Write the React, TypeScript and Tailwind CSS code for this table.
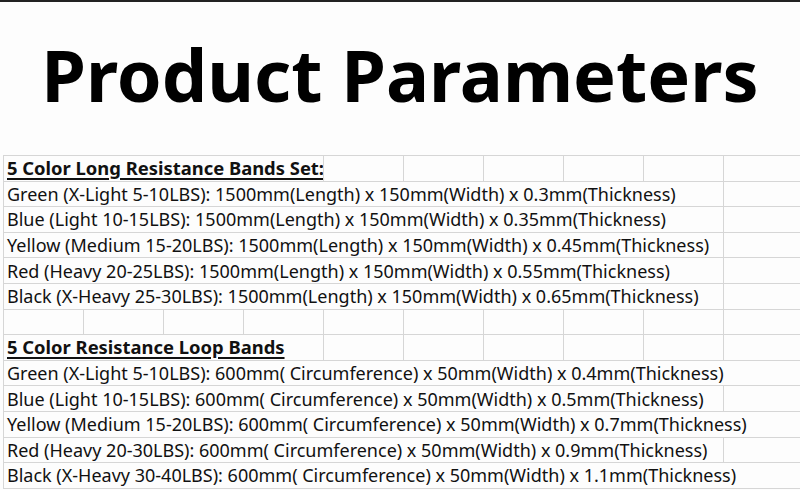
import React from 'react';

type Row = { text?: string; span?: number; head?: boolean };

const rows: Row[] = [
  { text: '5 Color Long Resistance Bands Set:', span: 4, head: true },
  { text: 'Green (X-Light 5-10LBS): 1500mm(Length) x 150mm(Width) x 0.3mm(Thickness)', span: 9 },
  { text: 'Blue (Light 10-15LBS): 1500mm(Length) x 150mm(Width) x 0.35mm(Thickness)', span: 9 },
  { text: 'Yellow (Medium 15-20LBS): 1500mm(Length) x 150mm(Width) x 0.45mm(Thickness)', span: 9 },
  { text: 'Red (Heavy 20-25LBS): 1500mm(Length) x 150mm(Width) x 0.55mm(Thickness)', span: 9 },
  { text: 'Black (X-Heavy 25-30LBS): 1500mm(Length) x 150mm(Width) x 0.65mm(Thickness)', span: 9 },
  {},
  { text: '5 Color Resistance Loop Bands', span: 4, head: true },
  { text: 'Green (X-Light 5-10LBS): 600mm( Circumference) x 50mm(Width) x 0.4mm(Thickness)', span: 10 },
  { text: 'Blue (Light 10-15LBS): 600mm( Circumference) x 50mm(Width) x 0.5mm(Thickness)', span: 9 },
  { text: 'Yellow (Medium 15-20LBS): 600mm( Circumference) x 50mm(Width) x 0.7mm(Thickness)', span: 10 },
  { text: 'Red (Heavy 20-30LBS): 600mm( Circumference) x 50mm(Width) x 0.9mm(Thickness)', span: 9 },
  { text: 'Black (X-Heavy 30-40LBS): 600mm( Circumference) x 50mm(Width) x 1.1mm(Thickness)', span: 10 },
];

const SheetRow: React.FC<{ row: Row }> = ({ row }) => {
  const span = row.span ?? 0;
  const empty = Array.from({ length: 10 - span });
  return (
    <div className="flex h-[25.6px] border-b border-[#d6d6d6]">
      {span > 0 && (
        <div
          className="shrink-0 border-l border-[#d6d6d6] pl-[3px] flex items-center whitespace-nowrap overflow-visible"
          style={{ width: span * 80 }}
        >
          {row.head ? (
            <span className="text-[18.4px] font-bold underline decoration-[1.5px] underline-offset-[3px]">{row.text}</span>
          ) : (
            <span>{row.text}</span>
          )}
        </div>
      )}
      {empty.map((_, i) => (
        <div key={i} className="w-[80px] shrink-0 border-l border-[#d6d6d6]" />
      ))}
    </div>
  );
};

export default function App() {
  return (
    <div
      className="w-[800px] h-[490px] overflow-hidden bg-[#fdfdfd] border-t-2 border-[#222222] text-[#111111]"
      style={{ fontFamily: '"Noto Sans", "Open Sans", sans-serif' }}
    >
      <div className="h-[153px] flex items-center justify-center">
        <h1 className="text-[72px] font-bold text-black leading-none pb-[10px]">Product Parameters</h1>
      </div>
      <div className="pl-[3px] text-[18px] leading-none">
        <div className="border-t border-[#d6d6d6]">
          {rows.map((r, i) => (
            <SheetRow key={i} row={r} />
          ))}
        </div>
      </div>
    </div>
  );
}
